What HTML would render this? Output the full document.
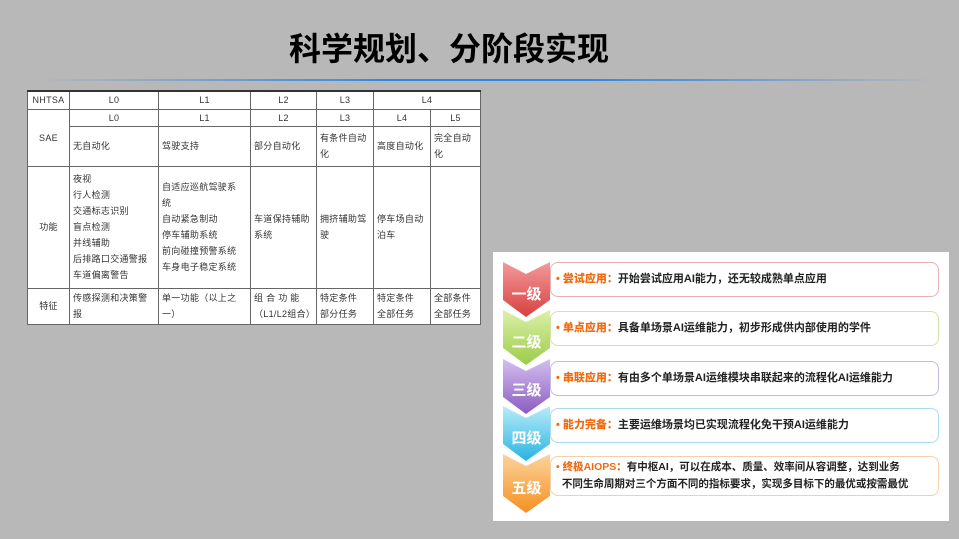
<!DOCTYPE html>
<html><head><meta charset="utf-8"><style>
body{margin:0;width:959px;height:539px;background:#b8b8b8;position:relative;overflow:hidden;font-family:"Liberation Sans","Noto Sans CJK SC",sans-serif}
.t{position:absolute;left:0;width:898px;top:24px;text-align:center;font-size:32px;font-weight:bold;color:#000}
.line{position:absolute;left:40px;width:895px;top:79px;height:2px;background:linear-gradient(90deg,rgba(60,140,230,0),#2a86e8 40%,#2a86e8 60%,rgba(60,140,230,0))}
table{position:absolute;left:27px;top:90px;width:453px;height:233px;border-collapse:collapse;background:#fff;font-size:9px;color:#333;table-layout:fixed;border-top:2px solid #333;letter-spacing:0.3px}
td{border:1px solid #666;padding:0 3px;vertical-align:middle;line-height:16px;overflow:hidden}
.c{text-align:center}
.panel{position:absolute;left:493px;top:252px;width:456px;height:269px;background:#fff}
.box{position:absolute;left:57px;width:389px;height:35px;border:1px solid;border-radius:8px;font-size:11px;font-weight:bold;color:#222;box-sizing:border-box;padding-left:5px;display:flex;align-items:center;line-height:17px;white-space:nowrap}
.box b{color:#f06a10}
.lbl{position:absolute;left:10px;width:47px;text-align:center;color:#fff;font-weight:bold;font-size:15px}
</style></head><body>
<div class="t">科学规划、分阶段实现</div>
<div class="line"></div>
<table>
<colgroup><col style="width:42px"><col style="width:89px"><col style="width:92px"><col style="width:66px"><col style="width:57px"><col style="width:57px"><col style="width:50px"></colgroup>
<tr style="height:18px"><td class="c">NHTSA</td><td class="c">L0</td><td class="c">L1</td><td class="c">L2</td><td class="c">L3</td><td class="c" colspan="2">L4</td></tr>
<tr style="height:17px"><td class="c" rowspan="2">SAE</td><td class="c">L0</td><td class="c">L1</td><td class="c">L2</td><td class="c">L3</td><td class="c">L4</td><td class="c">L5</td></tr>
<tr style="height:40px"><td>无自动化</td><td>驾驶支持</td><td>部分自动化</td><td>有条件自动<br>化</td><td>高度自动化</td><td>完全自动<br>化</td></tr>
<tr style="height:122px"><td class="c">功能</td><td>夜视<br>行人检测<br>交通标志识别<br>盲点检测<br>并线辅助<br>后排路口交通警报<br>车道偏离警告</td><td>自适应巡航驾驶系<br>统<br>自动紧急制动<br>停车辅助系统<br>前向碰撞预警系统<br>车身电子稳定系统</td><td>车道保持辅助<br>系统</td><td>拥挤辅助驾<br>驶</td><td>停车场自动<br>泊车</td><td></td></tr>
<tr style="height:36px"><td class="c">特征</td><td>传感探测和决策警<br>报</td><td>单一功能（以上之<br>一）</td><td>组 合 功 能<br>（L1/L2组合）</td><td>特定条件<br>部分任务</td><td>特定条件<br>全部任务</td><td>全部条件<br>全部任务</td></tr>
</table>
<div class="panel">
<svg width="60" height="269" style="position:absolute;left:0;top:0">
<defs>
<linearGradient id="g1" x1="0" y1="0" x2="0" y2="1"><stop offset="0" stop-color="#f29a9a"/><stop offset="1" stop-color="#d84040"/></linearGradient>
<linearGradient id="g2" x1="0" y1="0" x2="0" y2="1"><stop offset="0" stop-color="#dcf0a8"/><stop offset="1" stop-color="#9ccc48"/></linearGradient>
<linearGradient id="g3" x1="0" y1="0" x2="0" y2="1"><stop offset="0" stop-color="#d4bff0"/><stop offset="1" stop-color="#8a5cc0"/></linearGradient>
<linearGradient id="g4" x1="0" y1="0" x2="0" y2="1"><stop offset="0" stop-color="#b8ecfa"/><stop offset="1" stop-color="#28b4e0"/></linearGradient>
<linearGradient id="g5" x1="0" y1="0" x2="0" y2="1"><stop offset="0" stop-color="#fcd49c"/><stop offset="1" stop-color="#f49020"/></linearGradient>
</defs>
<polygon points="10,10 33,22 57,10 57,48 33,65 10,48" fill="url(#g1)"/>
<polygon points="10,58 33,70 57,58 57,96 33,113 10,96" fill="url(#g2)"/>
<polygon points="10,107 33,119 57,107 57,145 33,162 10,145" fill="url(#g3)"/>
<polygon points="10,154 33,166 57,154 57,192 33,209 10,192" fill="url(#g4)"/>
<polygon points="10,202 33,214 57,202 57,244 33,261 10,244" fill="url(#g5)"/>
</svg>
<div class="lbl" style="top:31px">一级</div>
<div class="lbl" style="top:79px">二级</div>
<div class="lbl" style="top:127px">三级</div>
<div class="lbl" style="top:175px">四级</div>
<div class="lbl" style="top:225px">五级</div>
<div class="box" style="top:10px;border-color:#e8b0b0"><span><b>• 尝试应用：</b>开始尝试应用AI能力，还无较成熟单点应用</span></div>
<div class="box" style="top:59px;border-color:#d0e4a8"><span><b>• 单点应用：</b>具备单场景AI运维能力，初步形成供内部使用的学件</span></div>
<div class="box" style="top:109px;border-color:#c8b8e0"><span><b>• 串联应用：</b>有由多个单场景AI运维模块串联起来的流程化AI运维能力</span></div>
<div class="box" style="top:156px;border-color:#a8dcec"><span><b>• 能力完备：</b>主要运维场景均已实现流程化免干预AI运维能力</span></div>
<div class="box" style="top:204px;height:40px;border-color:#f4d0a8;font-size:10.5px"><span><b>• 终极AIOPS：</b>有中枢AI，可以在成本、质量、效率间从容调整，达到业务<br>&nbsp;&nbsp;不同生命周期对三个方面不同的指标要求，实现多目标下的最优或按需最优</span></div>
</div>
</body></html>
